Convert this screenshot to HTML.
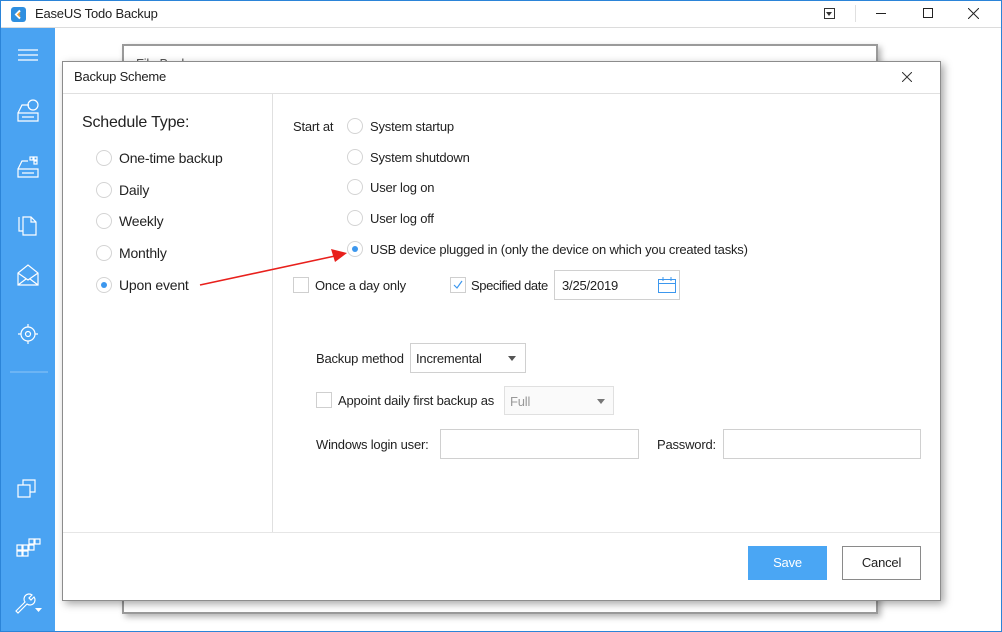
<!DOCTYPE html>
<html><head><meta charset="utf-8"><style>
*{box-sizing:border-box;margin:0;padding:0}
body{width:1002px;height:632px;position:relative;overflow:hidden;background:#fff;font-family:"Segoe UI","Liberation Sans",sans-serif;font-size:13px;color:#222;letter-spacing:-0.2px}
.a{position:absolute;white-space:nowrap}
.r{position:absolute;width:16px;height:16px;border:1px solid #d4d4d4;border-radius:50%;background:#fff}
.r.on::after{content:"";position:absolute;left:4px;top:4px;width:6px;height:6px;border-radius:50%;background:#3c97ee}
.cb{position:absolute;width:16px;height:16px;border:1px solid #cfcfcf;background:#fff}
.box{position:absolute;border:1px solid #d0d0d0;background:#fff}
.tri{position:absolute;width:0;height:0;border-left:4px solid transparent;border-right:4px solid transparent;border-top:5px solid #555}
</style></head><body>
<div class="a" style="left:0;top:0;width:1002px;height:632px;border:1px solid #2b84d8"></div>
<div class="a" style="left:1px;top:27px;width:1000px;height:1px;background:#dcdcdc"></div>
<div class="a" style="left:11px;top:7px;width:15px;height:15px;background:#2f8fe0;border-radius:3px"></div>
<svg class="a" style="left:11px;top:7px" width="15" height="15"><path d="M9 3.5 L5 7.5 L9 11.5" stroke="#fff" stroke-width="2" fill="none"/><path d="M9 5.5 L7 7.5 L9 9.5" stroke="#f7a030" stroke-width="1.5" fill="none"/></svg>
<div class="a" style="left:35px;top:6px;font-size:13px">EaseUS Todo Backup</div>
<div class="a" style="left:824px;top:8px;width:11px;height:11px;border:1px solid #333"></div>
<div class="tri" style="left:826px;top:12px;border-top-color:#333;border-left-width:3.5px;border-right-width:3.5px;border-top-width:4px"></div>
<div class="a" style="left:855px;top:5px;width:1px;height:17px;background:#e0e0e0"></div>
<div class="a" style="left:876px;top:13px;width:10px;height:1px;background:#222"></div>
<div class="a" style="left:923px;top:8px;width:10px;height:10px;border:1px solid #222"></div>
<svg class="a" style="left:968px;top:8px" width="11" height="11"><path d="M0 0L11 11M11 0L0 11" stroke="#222" stroke-width="1"/></svg>
<div class="a" style="left:1px;top:28px;width:54px;height:603px;background:#4aa3f2"></div>
<svg class="a" style="left:1px;top:28px" width="54" height="603" fill="none" stroke="#fff" stroke-width="1.2">
<path d="M17 22h20M17 27h20M17 32h20"/>
<path d="M17 85l4-8h7M17 85h20v8h-20z M21 89h12"/><circle cx="32" cy="77" r="5"/>
<path d="M17 141l4-8h6M17 141h20v8h-20z M21 145h12"/><rect x="29" y="129" width="3" height="3"/><rect x="33" y="129" width="3" height="3"/><rect x="33" y="133" width="3" height="3"/>
<path d="M18 189v14h4 M22 189h8l5 5v13h-13z M30 189v5h5"/>
<path d="M17 245l10-8 10 8v12h-20z M17 245l10 7 10-7 M17 257l8-6 M37 257l-8-6"/>
<circle cx="27" cy="306" r="7"/><circle cx="27" cy="306" r="2.5"/><path d="M27 296v3M27 313v3M17 306h3M34 306h3"/>
<path d="M9 344h38" stroke-opacity=".3"/>
<path d="M17 457h12v12h-12z M22 457v-5h12v12h-5"/>
<path d="M16 517h5v5h-5zM22 517h5v5h-5zM16 523h5v5h-5zM22 523h5v5h-5zM28 511h5v5h-5zM28 517h5v5h-5zM34 511h5v5h-5z"/>
<path d="M15 583l9-9a5 5 0 0 1 7-7l-3 3 2 2 3-3a5 5 0 0 1-7 7l-9 9z"/>
<path d="M34 580h7l-3.5 4z" fill="#fff" stroke="none"/>
</svg>
<div class="a" style="left:122px;top:44px;width:756px;height:570px;background:#fff;border:2px solid #9a9a9a;box-shadow:3px 3px 6px rgba(0,0,0,.3)"></div>
<div class="a" style="left:136px;top:56px;color:#555">File Backup</div>
<div class="a" style="left:62px;top:61px;width:879px;height:540px;background:#fff;border:1px solid #8c8c8c;box-shadow:3px 3px 8px rgba(0,0,0,.35)"></div>
<div class="a" style="left:74px;top:69px">Backup Scheme</div>
<svg class="a" style="left:902px;top:72px" width="10" height="10"><path d="M0 0L10 10M10 0L0 10" stroke="#333"/></svg>
<div class="a" style="left:63px;top:93px;width:877px;height:1px;background:#e0e0e0"></div>
<div class="a" style="left:272px;top:94px;width:1px;height:438px;background:#e0e0e0"></div>
<div class="a" style="left:63px;top:532px;width:877px;height:1px;background:#e6e6e6"></div>
<div class="a" style="left:82px;top:114px;font-size:16px">Schedule Type:</div>
<div class="r" style="left:96px;top:150px"></div><div class="a" style="left:119px;top:150px;font-size:14px">One-time backup</div>
<div class="r" style="left:96px;top:182px"></div><div class="a" style="left:119px;top:182px;font-size:14px">Daily</div>
<div class="r" style="left:96px;top:213px"></div><div class="a" style="left:119px;top:213px;font-size:14px">Weekly</div>
<div class="r" style="left:96px;top:245px"></div><div class="a" style="left:119px;top:245px;font-size:14px">Monthly</div>
<div class="r on" style="left:96px;top:277px"></div><div class="a" style="left:119px;top:277px;font-size:14px">Upon event</div>
<div class="a" style="left:293px;top:119px">Start at</div>
<div class="r" style="left:347px;top:118px"></div><div class="a" style="left:370px;top:119px">System startup</div>
<div class="r" style="left:347px;top:149px"></div><div class="a" style="left:370px;top:150px">System shutdown</div>
<div class="r" style="left:347px;top:179px"></div><div class="a" style="left:370px;top:180px">User log on</div>
<div class="r" style="left:347px;top:210px"></div><div class="a" style="left:370px;top:211px">User log off</div>
<div class="r on" style="left:347px;top:241px"></div><div class="a" style="left:370px;top:242px">USB device plugged in (only the device on which you created tasks)</div>
<svg class="a" style="left:195px;top:240px" width="160" height="50"><path d="M5 45L140 16" stroke="#e8201c" stroke-width="1.6"/><path d="M152 13L136 9 140 22z" fill="#e8201c"/></svg>
<div class="cb" style="left:293px;top:277px"></div><div class="a" style="left:315px;top:278px">Once a day only</div>
<div class="cb" style="left:450px;top:277px"></div>
<svg class="a" style="left:452px;top:279px" width="12" height="12"><path d="M2 6l3 3 5-7" stroke="#3c97ee" stroke-width="1.2" fill="none"/></svg>
<div class="a" style="left:471px;top:278px;letter-spacing:-0.4px">Specified date</div>
<div class="box" style="left:554px;top:270px;width:126px;height:30px"></div>
<div class="a" style="left:562px;top:278px">3/25/2019</div>
<svg class="a" style="left:657px;top:276px" width="20" height="18" fill="none" stroke="#3c97ee"><rect x="1.5" y="3.5" width="17" height="13"/><path d="M1.5 7.5h17M6 1v4M14 1v4"/></svg>
<div class="a" style="left:316px;top:351px">Backup method</div>
<div class="box" style="left:410px;top:343px;width:116px;height:30px"></div>
<div class="a" style="left:416px;top:351px">Incremental</div>
<div class="tri" style="left:508px;top:356px"></div>
<div class="cb" style="left:316px;top:392px"></div>
<div class="a" style="left:338px;top:393px">Appoint daily first backup as</div>
<div class="box" style="left:504px;top:386px;width:110px;height:29px;background:#fafafa;border-color:#e0e0e0"></div>
<div class="a" style="left:510px;top:394px;color:#999">Full</div>
<div class="tri" style="left:597px;top:399px;border-top-color:#777"></div>
<div class="a" style="left:316px;top:437px">Windows login user:</div>
<div class="box" style="left:440px;top:429px;width:199px;height:30px"></div>
<div class="a" style="left:657px;top:437px">Password:</div>
<div class="box" style="left:723px;top:429px;width:198px;height:30px"></div>
<div class="a" style="left:748px;top:546px;width:79px;height:34px;background:#4aa6f4;color:#fff;text-align:center;line-height:34px">Save</div>
<div class="a" style="left:842px;top:546px;width:79px;height:34px;border:1px solid #8a8a8a;text-align:center;line-height:32px">Cancel</div>
</body></html>
